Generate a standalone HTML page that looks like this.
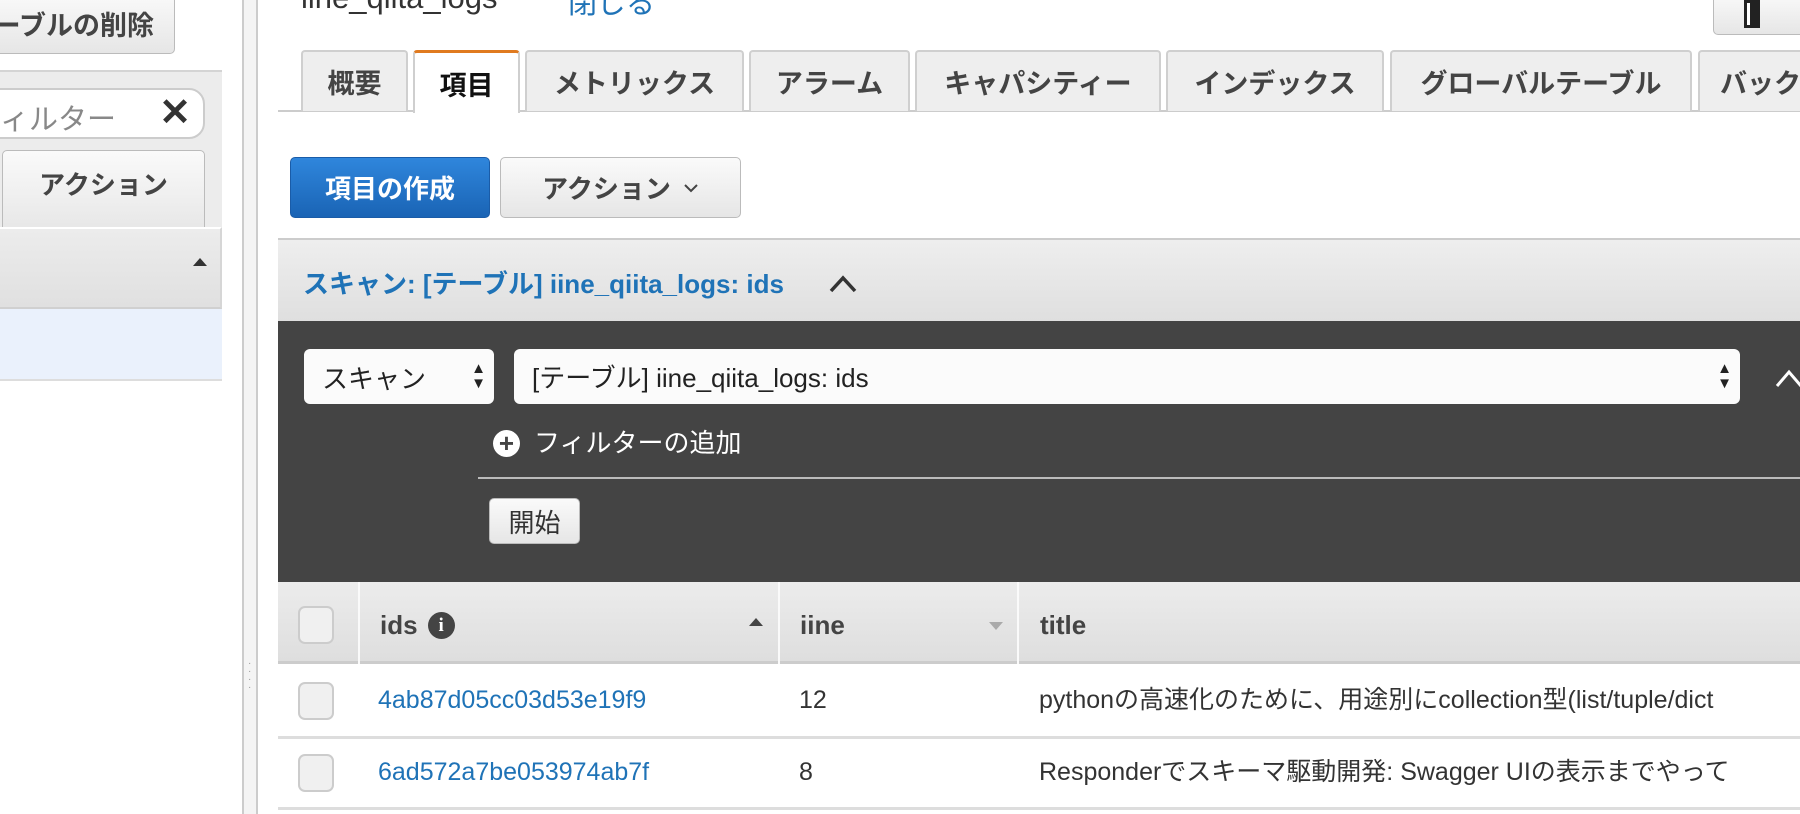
<!DOCTYPE html>
<html><head><meta charset="utf-8"><style>
*{box-sizing:border-box;margin:0;padding:0}
body{width:1800px;height:814px;overflow:hidden;background:#fff;position:relative;font-family:"Liberation Sans","Noto Sans CJK JP",sans-serif;color:#333}
.a{position:absolute}
.btn{position:absolute;border:1px solid #bbb;border-radius:5px;background:linear-gradient(#fafafa,#e6e6e6);font-weight:bold;font-size:26px;color:#444;display:flex;align-items:center;justify-content:center}
.tab{position:absolute;top:50px;height:61px;border:2px solid #cfcfcf;border-bottom:none;border-radius:4px 4px 0 0;background:#eee;font-weight:bold;font-size:27px;color:#444;display:flex;align-items:center;justify-content:center}
.th{position:absolute;top:582px;height:82px;font-weight:bold;font-size:26px;color:#444;display:flex;align-items:center}
.cb{position:absolute;width:36px;height:38px;border:2px solid #ccc;border-radius:7px;background:#f0f0f0}
.row{font-size:25px;position:absolute;line-height:30px;height:30px;white-space:nowrap}
</style></head><body>
<!-- left panel -->
<div class="a" style="left:0;top:70px;width:222px;height:160px;background:#ececec;border-top:2px solid #d4d4d4"></div>
<div class="btn" style="left:-10px;top:-8px;width:185px;height:62px;font-size:27px;justify-content:flex-end;padding-right:20px">ーブルの削除</div>
<div class="a" style="left:-20px;top:88px;width:225px;height:51px;background:#fff;border:2px solid #ccc;border-radius:16px;font-size:29px;color:#888;padding:6px 0 0 18px">ィルター<span style="position:absolute;right:12px;top:0px;font-size:38px;color:#333;font-weight:bold">✕</span></div>
<div class="btn" style="left:2px;top:150px;width:203px;height:85px;align-items:flex-start;padding-top:14px">アクション</div>
<div class="a" style="left:0;top:227px;width:222px;height:82px;background:linear-gradient(#ececec,#e0e0e0);border-top:2px solid #fff;border-bottom:2px solid #d0d0d0;border-right:2px solid #d6d6d6"></div>
<div class="a" style="left:193px;top:258px;width:0;height:0;border-left:7px solid transparent;border-right:7px solid transparent;border-bottom:8px solid #333"></div>
<div class="a" style="left:0;top:309px;width:222px;height:72px;background:#eaf1fc;border-bottom:2px solid #ddd"></div>
<!-- splitter -->
<div class="a" style="left:242px;top:0;width:16px;height:814px;background:#f4f4f4;border-left:2px solid #ccc;border-right:2px solid #ccc"></div>
<div class="a" style="left:248px;top:660px;font-size:10px;line-height:8px;color:#999">·<br>·<br>·<br>·</div>
<!-- title -->
<div class="a" style="left:301px;top:-20px;font-size:31px;color:#333">iine_qiita_logs</div>
<div class="a" style="left:568px;top:-20px;font-size:29px;color:#1f73b7">閉じる</div>
<div class="btn" style="left:1713px;top:-8px;width:100px;height:43px;justify-content:flex-start;padding-left:30px"><span style="display:block;width:16px;height:28px;border:3px solid #222;border-right-width:10px;background:#fff"></span></div>
<!-- tabs -->
<div class="a" style="left:278px;top:110px;width:1522px;height:2px;background:#ccc"></div>
<div class="tab" style="left:301px;width:107px">概要</div>
<div class="tab" style="left:413px;width:107px;background:#fff;border-top:3px solid #e07a1f;height:63px;color:#111">項目</div>
<div class="tab" style="left:525px;width:219px">メトリックス</div>
<div class="tab" style="left:749px;width:161px">アラーム</div>
<div class="tab" style="left:915px;width:246px">キャパシティー</div>
<div class="tab" style="left:1166px;width:218px">インデックス</div>
<div class="tab" style="left:1390px;width:302px">グローバルテーブル</div>
<div class="tab" style="left:1698px;width:120px;justify-content:flex-start;padding-left:20px">バック</div>
<!-- buttons -->
<div class="btn" style="left:290px;top:157px;width:200px;height:61px;background:linear-gradient(#2f86dc,#1a64b5);border-color:#1a5ca8;color:#fff">項目の作成</div>
<div class="btn" style="left:500px;top:157px;width:241px;height:61px">アクション <svg width="16" height="12" style="margin-left:12px"><path d="M2 3 L8 9 L14 3" fill="none" stroke="#444" stroke-width="2"/></svg></div>
<!-- scan header -->
<div class="a" style="left:278px;top:238px;width:1522px;height:83px;background:linear-gradient(#eeeeee,#dfdfdf);border-top:2px solid #ccc"></div>
<div class="a" style="left:303px;top:264px;font-size:26px;font-weight:bold;color:#1f73b7">スキャン: [テーブル] iine_qiita_logs: ids</div>
<svg class="a" style="left:828px;top:272px" width="30" height="22"><path d="M3 19 L15 6 L27 19" fill="none" stroke="#333" stroke-width="3.5"/></svg>
<!-- dark panel -->
<div class="a" style="left:278px;top:321px;width:1522px;height:261px;background:#444"></div>
<div class="a" style="left:304px;top:349px;width:190px;height:55px;background:#fbfbfb;border-radius:6px;font-size:26px;color:#222;padding:10px 0 0 18px">スキャン<span style="position:absolute;right:8px;top:12px;font-size:15px;line-height:15px">▲<br>▼</span></div>
<div class="a" style="left:514px;top:349px;width:1226px;height:55px;background:#fbfbfb;border-radius:6px;font-size:26px;color:#222;padding:9px 0 0 18px">[テーブル] iine_qiita_logs: ids<span style="position:absolute;right:8px;top:12px;font-size:15px;line-height:15px">▲<br>▼</span></div>
<svg class="a" style="left:1774px;top:364px" width="30" height="26"><path d="M3 22 L15 8 L27 22" fill="none" stroke="#fff" stroke-width="3"/></svg>
<div class="a" style="left:493px;top:430px;width:27px;height:27px;border-radius:50%;background:#fff;color:#444;font-weight:bold;font-size:26px;line-height:27px;text-align:center">+</div>
<div class="a" style="left:534px;top:423px;font-size:26px;color:#fff">フィルターの追加</div>
<div class="a" style="left:478px;top:477px;width:1322px;height:2px;background:#bbb"></div>
<div class="btn" style="left:489px;top:498px;width:91px;height:46px;font-weight:normal;color:#333">開始</div>
<!-- table -->
<div class="a" style="left:278px;top:582px;width:1522px;height:82px;background:linear-gradient(#ececec,#dedede);border-bottom:3px solid #ccc"></div>
<div class="a" style="left:358px;top:582px;width:2px;height:82px;background:#fafafa"></div>
<div class="a" style="left:778px;top:582px;width:2px;height:82px;background:#fafafa"></div>
<div class="a" style="left:1017px;top:582px;width:2px;height:82px;background:#fafafa"></div>
<div class="cb" style="left:298px;top:606px"></div>
<div class="th" style="left:380px;top:584px">ids <span style="display:inline-block;width:27px;height:27px;border-radius:50%;background:#444;color:#fff;font-size:19px;text-align:center;line-height:27px;margin-left:10px;font-family:'Liberation Serif',serif;font-weight:bold">i</span></div>
<div class="a" style="left:749px;top:618px;width:0;height:0;border-left:7px solid transparent;border-right:7px solid transparent;border-bottom:8px solid #444"></div>
<div class="th" style="left:800px;top:584px">iine</div>
<div class="a" style="left:989px;top:622px;width:0;height:0;border-left:7px solid transparent;border-right:7px solid transparent;border-top:8px solid #aaa"></div>
<div class="th" style="left:1040px;top:584px">title</div>
<div class="a" style="left:278px;top:736px;width:1522px;height:3px;background:#ddd"></div>
<div class="a" style="left:278px;top:807px;width:1522px;height:3px;background:#ddd"></div>
<div class="cb" style="left:298px;top:682px"></div>
<div class="cb" style="left:298px;top:754px"></div>
<div class="row" style="left:378px;top:685px;color:#1f73b7">4ab87d05cc03d53e19f9</div>
<div class="row" style="left:799px;top:685px">12</div>
<div class="row" style="left:1039px;top:685px">pythonの高速化のために、用途別にcollection型(list/tuple/dict</div>
<div class="row" style="left:378px;top:757px;color:#1f73b7">6ad572a7be053974ab7f</div>
<div class="row" style="left:799px;top:757px">8</div>
<div class="row" style="left:1039px;top:757px">Responderでスキーマ駆動開発: Swagger UIの表示までやって</div>
</body></html>
